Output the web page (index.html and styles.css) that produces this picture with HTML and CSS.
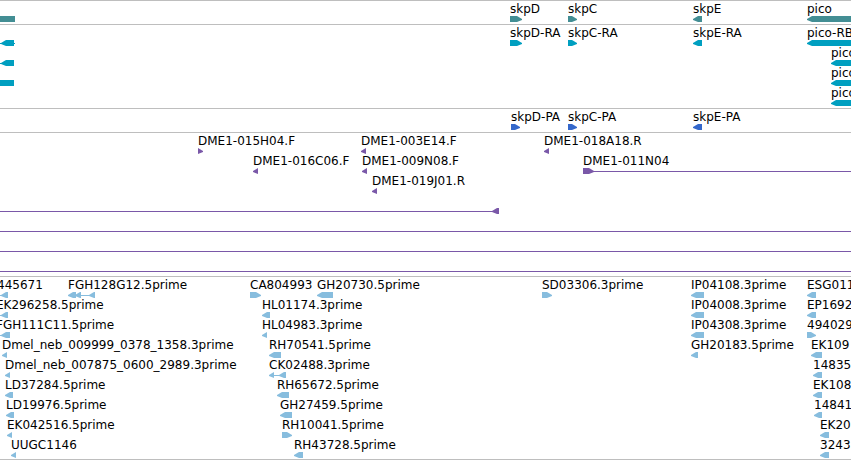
FILE: index.html
```
<!DOCTYPE html>
<html lang="en">

<head>
  <meta charset="UTF-8">
  <meta name="viewport" content="width=device-width, initial-scale=1">
  <title>Genome tracks</title>
  <link rel="stylesheet" href="styles.css">
</head>

<body>
  <main class="browser" id="browser"></main>
  <script src="tracks.js"></script>
</body>

</html>
```

FILE: styles.css
```
body {
  margin: 0;
  background-color: #FFFFFF;
  color: #000000;
  font-family: "DejaVu Sans", sans-serif;
  font-size: 12px;
  line-height: 14px;
}

.browser {
  overflow: hidden;
}

.track {
  border-top: 1px solid #BEBEBE;
  padding: 1px 0 2px;
}

.track:last-child {
  border-bottom: 1px solid #BEBEBE;
  padding-bottom: 1px;
}

.labels {
  position: relative;
  height: 14px;
}

/* labels sit at their position on the sequence */
.label {
  position: absolute;
  top: 0;
  white-space: nowrap;
}

.glyphs {
  display: block;
  width: 100%;
  height: 6px;
}

.gene {
  fill: #438E94;
}

.transcript {
  fill: #009FC0;
}

.protein {
  fill: #3568CB;
}

.bac {
  fill: #7A58A8;
}

.est {
  fill: #87BDDE;
}
```

FILE: tracks.js
```
// long enough to run past the right side of the window
const END = 4000;

// labels: [x, text]
// glyphs: [type, start, end], type is left, right, box or line
const tracks = [
  {
    type: "gene",
    rows: [
      {
        labels: [[510, "skpD"], [568, "skpC"], [693, "skpE"], [807, "pico"]],
        glyphs: [["box", 0, 15], ["right", 510, 522], ["right", 568, 577], ["left", 693, 702], ["left", 807, END]]
      }
    ]
  },
  {
    type: "transcript",
    rows: [
      {
        labels: [[510, "skpD-RA"], [568, "skpC-RA"], [693, "skpE-RA"], [807, "pico-RB"]],
        glyphs: [["line", 0, 15], ["left", 1, 14], ["right", 510, 522], ["right", 568, 577], ["left", 693, 702], ["left", 807, END]]
      },
      { labels: [[831, "pico"]], glyphs: [["line", 0, 4], ["left", 1, 14], ["left", 831, END]] },
      { labels: [[831, "pico"]], glyphs: [["box", 0, 14], ["left", 831, END]] },
      { labels: [[831, "pico"]], glyphs: [["left", 831, END]] }
    ]
  },
  {
    type: "protein",
    rows: [
      {
        labels: [[511, "skpD-PA"], [568, "skpC-PA"], [693, "skpE-PA"]],
        glyphs: [["right", 511, 520], ["right", 568, 577], ["left", 693, 702]]
      }
    ]
  },
  {
    type: "bac",
    rows: [
      {
        labels: [[198, "DME1-015H04.F"], [361, "DME1-003E14.F"], [544, "DME1-018A18.R"]],
        glyphs: [["right", 198, 203], ["left", 361, 366], ["left", 544, 549]]
      },
      {
        labels: [[253, "DME1-016C06.F"], [362, "DME1-009N08.F"], [583, "DME1-011N04"]],
        glyphs: [["left", 253, 258], ["left", 362, 367], ["right", 583, 594], ["line", 590, END]]
      },
      { labels: [[372, "DME1-019J01.R"]], glyphs: [["left", 372, 377]] },
      { labels: [], glyphs: [["line", 0, 494], ["left", 492, 499]] },
      { labels: [], glyphs: [["line", 0, END]] },
      { labels: [], glyphs: [["line", 0, END]] },
      { labels: [], glyphs: [["line", 0, END]] }
    ]
  },
  {
    type: "est",
    rows: [
      {
        labels: [[-3, "445671"], [68, "FGH128G12.5prime"], [250, "CA804993"], [317, "GH20730.5prime"], [542, "SD03306.3prime"], [691, "IP04108.3prime"], [807, "ESG011"]],
        glyphs: [["line", 0, 4], ["left", 1, 8], ["left", 68, 76], ["left", 75, 81], ["line", 80, 92], ["left", 89, 95], ["right", 250, 261], ["left", 317, 333], ["right", 542, 552], ["left", 691, 704], ["left", 807, 816]]
      },
      {
        labels: [[-4, "EK296258.5prime"], [262, "HL01174.3prime"], [691, "IP04008.3prime"], [807, "EP1692"]],
        glyphs: [["line", 0, 4], ["left", 1, 8], ["left", 262, 270], ["left", 691, 704], ["left", 807, 816]]
      },
      {
        labels: [[-4, "FGH111C11.5prime"], [262, "HL04983.3prime"], [691, "IP04308.3prime"], [807, "494029"]],
        glyphs: [["line", 0, 4], ["left", 1, 10], ["left", 262, 267], ["left", 691, 704], ["right", 807, 816]]
      },
      {
        labels: [[2, "Dmel_neb_009999_0378_1358.3prime"], [269, "RH70541.5prime"], [691, "GH20183.5prime"], [811, "EK109"]],
        glyphs: [["left", 2, 7], ["left", 269, 281], ["left", 691, 698], ["left", 811, 822]]
      },
      {
        labels: [[5, "Dmel_neb_007875_0600_2989.3prime"], [269, "CK02488.3prime"], [813, "14835"]],
        glyphs: [["left", 5, 10], ["left", 269, 274], ["line", 273, 282], ["left", 279, 286], ["left", 813, 822]]
      },
      {
        labels: [[5, "LD37284.5prime"], [277, "RH65672.5prime"], [813, "EK108"]],
        glyphs: [["left", 5, 13], ["left", 277, 289], ["left", 813, 822]]
      },
      {
        labels: [[6, "LD19976.5prime"], [280, "GH27459.5prime"], [814, "14841"]],
        glyphs: [["left", 6, 14], ["left", 280, 292], ["left", 814, 822]]
      },
      {
        labels: [[7, "EK042516.5prime"], [282, "RH10041.5prime"], [820, "EK20"]],
        glyphs: [["left", 7, 12], ["right", 282, 292], ["left", 820, 829]]
      },
      {
        labels: [[11, "UUGC1146"], [294, "RH43728.5prime"], [820, "3243"]],
        glyphs: [["left", 11, 16], ["left", 294, 303], ["left", 820, 829]]
      }
    ]
  }
];

// outline of one glyph, 6px high
function points(type, a, b) {
  const head = Math.min(5, b - a);
  if (type == "line") return `${a},3 ${b},3 ${b},4 ${a},4`;
  if (type == "left") return `${a},3 ${a + head},0 ${b},0 ${b},6 ${a + head},6 ${a},4`;
  if (type == "right") return `${a},0 ${b - head},0 ${b},3 ${b},4 ${b - head},6 ${a},6`;
  return `${a},0 ${b},0 ${b},6 ${a},6`;
}

let html = "";
for (const track of tracks) {
  html += '<section class="track">';
  for (const row of track.rows) {
    html += '<div class="row"><div class="labels">';
    for (const [x, text] of row.labels) {
      html += `<span class="label" style="left: ${x}px">${text}</span>`;
    }
    html += `</div><svg class="glyphs ${track.type}" aria-hidden="true">`;
    for (const [type, a, b] of row.glyphs) {
      html += `<polygon points="${points(type, a, b)}"/>`;
    }
    html += "</svg></div>";
  }
  html += "</section>";
}
document.getElementById("browser").innerHTML = html;
```
